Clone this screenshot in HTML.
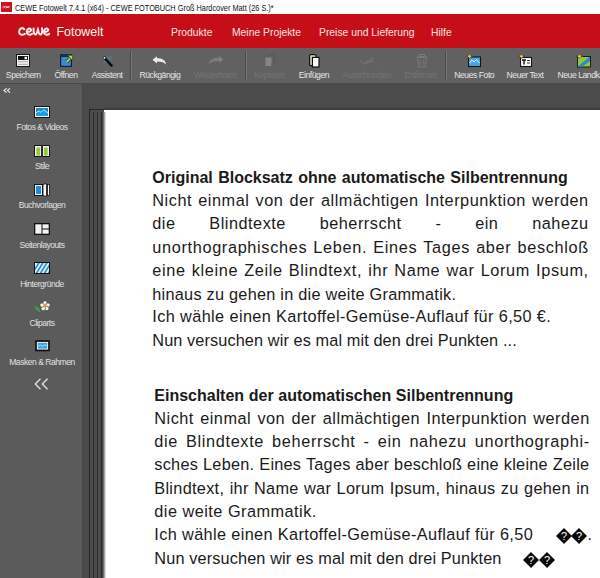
<!DOCTYPE html>
<html><head><meta charset="utf-8">
<style>
*{margin:0;padding:0;box-sizing:border-box}
html,body{width:600px;height:578px;overflow:hidden;background:#4b4b4b;font-family:"Liberation Sans",sans-serif}
.a{position:absolute}
#title{left:0;top:0;width:600px;height:14px;background:#fff}
#red{left:0;top:14px;width:600px;height:34px;background:#c60e18}
#tb{left:0;top:48px;width:600px;height:35px;background:#616161}
#tbb{left:0;top:83px;width:600px;height:1px;background:#4a4a4a}
#side{left:0;top:84px;width:82px;height:494px;background:#5b5b5b}
#sideb{left:82px;top:84px;width:1px;height:494px;background:#474747}
.tl{position:absolute;top:70px;font-size:8.6px;color:#e6e6e6;white-space:nowrap;letter-spacing:-0.45px;transform:translateX(-50%);line-height:10px}
.dis{color:#747474}
.sl{position:absolute;font-size:8.6px;color:#e0e0e0;white-space:nowrap;letter-spacing:-0.5px;transform:translateX(-50%);line-height:10px;left:42px}
.menu{position:absolute;top:27px;font-size:10.35px;color:#f6e4e4;white-space:nowrap;line-height:12px}
.ln{position:absolute;font-size:16.3px;line-height:20px;color:#1a1a1a;white-space:nowrap;text-align:justify;text-align-last:justify}
.b{font-weight:700;font-size:16px}
.w{position:absolute;font-size:16.3px;line-height:20px;color:#1a1a1a;white-space:nowrap}
</style></head><body>
<div id="title" class="a"></div>
<div class="a" style="left:1px;top:2px;width:11px;height:10px;background:#cc1020"></div><svg class="a" style="left:2px;top:5px" width="9" height="4" viewBox="0 0 9 4"><path d="M1.6 1 C0.6 1 0.5 3 1.6 3 M2.6 2 C3.6 2 3.6 1 3 1 C2.3 1 2.2 3 3.4 3 M4.1 1 L4.6 3 L5.1 1.6 L5.6 3 L6.1 1 M6.6 2 C7.6 2 7.6 1 7 1 C6.3 1 6.2 3 7.4 3" fill="none" stroke="#fbe0e0" stroke-width="0.7"/></svg>
<div class="a" style="left:15px;top:3px;font-size:8.8px;color:#111;white-space:nowrap;line-height:10px;transform-origin:0 0;transform:scaleX(0.835)">CEWE Fotowelt 7.4.1 (x64) - CEWE FOTOBUCH Groß Hardcover Matt (26 S.)*</div>
<div id="red" class="a"></div>
<svg class="a" style="left:17.5px;top:27px" width="33" height="10" viewBox="0 0 33 10"><g fill="none" stroke="#f8f0f0" stroke-width="2" stroke-linecap="round"><path d="M6.3 2.3 C5.5 1.2 3.8 1 2.6 1.7 C1 2.6 0.9 5.6 1.6 6.6 C2.6 8 5 8 6.8 6.8"/><path d="M8.8 4.9 C10.8 4.9 13 4.4 13.1 3 C13.1 1.6 11.5 1.2 10.5 1.7 C8.8 2.5 8.4 5.5 9.3 6.7 C10.3 7.9 12.5 7.8 14 6.8"/><path d="M15.6 1.6 C15.4 4 15.9 7.5 17.4 7.5 C18.9 7.5 19.4 4.2 19.9 2.6 C20.3 4.2 20.8 7.5 22.4 7.5 C23.9 7.5 24.6 4 24 1.2"/><path d="M26 4.9 C28 4.9 30.2 4.4 30.3 3 C30.3 1.6 28.7 1.2 27.7 1.7 C26 2.5 25.6 5.5 26.5 6.7 C27.5 7.9 29.7 7.8 31.2 6.8"/></g></svg>
<div class="a" style="left:56.5px;top:25px;font-size:12.4px;color:#f5f5f5;line-height:14px">Fotowelt</div>
<div class="menu" style="left:171px">Produkte</div>
<div class="menu" style="left:232px">Meine Projekte</div>
<div class="menu" style="left:319px">Preise und Lieferung</div>
<div class="menu" style="left:431px">Hilfe</div>
<div id="tb" class="a"></div>
<div id="tbb" class="a"></div>
<div class="a" style="left:130px;top:51px;width:1px;height:29px;background:#4a4a4a"></div>
<div class="a" style="left:131px;top:51px;width:1px;height:29px;background:#777"></div>
<div class="a" style="left:245px;top:51px;width:1px;height:29px;background:#4a4a4a"></div>
<div class="a" style="left:246px;top:51px;width:1px;height:29px;background:#777"></div>
<div class="a" style="left:445px;top:51px;width:1px;height:29px;background:#4a4a4a"></div>
<div class="a" style="left:446px;top:51px;width:1px;height:29px;background:#777"></div>
<div class="tl" style="left:23.2px">Speichern</div>
<div class="tl" style="left:66px">Öffnen</div>
<div class="tl" style="left:107.1px">Assistent</div>
<div class="tl" style="left:159.9px">Rückgängig</div>
<div class="tl dis" style="left:215.3px">Wiederholen</div>
<div class="tl dis" style="left:269.4px">Kopieren</div>
<div class="tl" style="left:313.9px">Einfügen</div>
<div class="tl dis" style="left:366.7px">Ausschneiden</div>
<div class="tl dis" style="left:420.8px">Entfernen</div>
<div class="tl" style="left:474.2px">Neues Foto</div>
<div class="tl" style="left:525px">Neuer Text</div>
<div class="tl" style="left:557.5px;transform:none">Neue Landkarte</div>

<div id="side" class="a"></div>
<div id="sideb" class="a"></div>
<svg class="a" style="left:2.5px;top:88px" width="8" height="5" viewBox="0 0 8 5"><path d="M3.6 0.3 L1 2.5 L3.6 4.7 M7 0.3 L4.4 2.5 L7 4.7" fill="none" stroke="#e6e6e6" stroke-width="1.1"/></svg>
<div class="sl" style="top:122px">Fotos &amp; Videos</div>
<div class="sl" style="top:161px">Stile</div>
<div class="sl" style="top:200px">Buchvorlagen</div>
<div class="sl" style="top:240px">Seitenlayouts</div>
<div class="sl" style="top:279px">Hintergründe</div>
<div class="sl" style="top:318px">Cliparts</div>
<div class="sl" style="top:357px">Masken &amp; Rahmen</div>
<svg class="a" style="left:34px;top:377.5px" width="15" height="12" viewBox="0 0 15 12"><path d="M6.5 0.8 L1.3 6 L6.5 11.2 M13.5 0.8 L8.3 6 L13.5 11.2" fill="none" stroke="#e6e6e6" stroke-width="1.3"/></svg>


<!-- toolbar icons -->
<svg class="a" style="left:16px;top:54px" width="14" height="13" viewBox="0 0 14 13"><rect x="0.5" y="0.5" width="13" height="12" fill="#f4f4f4" stroke="#151515"/><rect x="2" y="2" width="10" height="4" fill="#111"/><rect x="8.5" y="2.8" width="2.5" height="2.4" fill="#fff"/><rect x="2" y="7.3" width="10" height="0.9" fill="#9a9a9a"/><rect x="2" y="9.8" width="10" height="0.9" fill="#9a9a9a"/></svg>
<svg class="a" style="left:60px;top:54px" width="14" height="13" viewBox="0 0 14 13"><rect x="0.6" y="0.8" width="10.8" height="11.6" fill="#3a88d8" stroke="#152038" stroke-width="1.2"/><rect x="1" y="1.3" width="10" height="1.6" fill="#10203a"/><path d="M6.5 8 L10.2 4.3" stroke="#1e3010" stroke-width="3.2"/><path d="M6.5 8 L10.2 4.3" stroke="#a8dc58" stroke-width="1.8"/><path d="M7.5 1.3 L12.6 1.3 L12.6 6.4 Z" fill="#a8dc58" stroke="#1e3010" stroke-width="0.6"/></svg>
<svg class="a" style="left:100px;top:53px" width="16" height="14" viewBox="0 0 16 14"><path d="M3 11 L5 4.5 L12.5 2 L11 8 Z" fill="#4a8ca6" opacity="0.4"/><path d="M4.6 5 L11.6 12.6" stroke="#0a0a0a" stroke-width="2.4" stroke-linecap="round"/><circle cx="4.4" cy="4.8" r="1.6" fill="#1a1a1a"/><circle cx="4.4" cy="4.9" r="0.9" fill="#fff"/></svg>
<svg class="a" style="left:152px;top:56px" width="15" height="10" viewBox="0 0 15 10"><path d="M0.5 3.8 L5 0.3 L5 2.3 C10 2.3 13.5 4 14.2 8.8 C12.5 6.5 9.5 5.6 5 5.6 L5 7.4 Z" fill="#ececec"/></svg>
<svg class="a" style="left:208px;top:55.5px" width="16" height="9" viewBox="0 0 16 9"><path d="M15.5 3.3 L11 -0.2 L11 1.8 C6 1.8 2 3.5 0.7 8.3 C3 6 6.5 5.1 11 5.1 L11 6.9 Z" fill="#7e7e7e"/></svg>
<svg class="a" style="left:265px;top:54px" width="10" height="13" viewBox="0 0 10 13"><rect x="2.5" y="0.5" width="7" height="9.5" fill="none" stroke="#575757"/><rect x="0.5" y="3.5" width="6" height="8.5" fill="#858585"/></svg>
<svg class="a" style="left:309px;top:54px" width="11" height="14" viewBox="0 0 11 14"><rect x="0.6" y="0.6" width="6.4" height="11" rx="1" fill="#e6dcc6" stroke="#111" stroke-width="1.2"/><rect x="3.4" y="3.4" width="6.6" height="9.6" fill="#fafafa" stroke="#111" stroke-width="1.2"/></svg>
<svg class="a" style="left:359px;top:55px" width="17" height="11" viewBox="0 0 17 11"><path d="M1 5 L5 9 L15 2" fill="none" stroke="#6d6d6d" stroke-width="1.6"/><path d="M6 8 L15 6" fill="none" stroke="#747474" stroke-width="1.4"/></svg>
<svg class="a" style="left:416px;top:54px" width="12" height="14" viewBox="0 0 12 14"><rect x="3.5" y="0.5" width="5" height="2" fill="none" stroke="#7a7a7a"/><rect x="0.5" y="2.5" width="11" height="1.5" fill="#7a7a7a"/><path d="M1.8 4.5 L2.8 13 L9.2 13 L10.2 4.5" fill="none" stroke="#7a7a7a" stroke-width="1.1"/><path d="M4.5 6 L4.8 11 M7.5 6 L7.2 11" stroke="#727272"/></svg>
<svg class="a" style="left:466px;top:53px" width="16" height="15" viewBox="0 0 16 15"><rect x="2.5" y="4" width="12" height="9.5" fill="#4aa6e0" stroke="#141414" stroke-width="1.1"/><path d="M3.5 10 L6 7 L8 9 L10.5 6.5 L13.5 10" fill="none" stroke="#d8f2ff" stroke-width="1"/><path d="M3.5 1 L5 2.8 L7 3.3 L5 3.8 L3.5 5.6 L2 3.8 L0 3.3 L2 2.8 Z" fill="#f1c25a" stroke="#3a2a10" stroke-width="0.5"/></svg>
<svg class="a" style="left:518px;top:53px" width="15" height="15" viewBox="0 0 15 15"><rect x="2.5" y="4.5" width="11" height="9" fill="#f7f7f7" stroke="#141414" stroke-width="1.1"/><path d="M4 7 H8 M6 7 V11.5" stroke="#111" stroke-width="1.4"/><path d="M9 7.5 H12 M9 10 H12" stroke="#333" stroke-width="1"/><path d="M3.5 1 L5 2.8 L7 3.3 L5 3.8 L3.5 5.6 L2 3.8 L0 3.3 L2 2.8 Z" fill="#f1c25a" stroke="#3a2a10" stroke-width="0.5"/></svg>
<svg class="a" style="left:576px;top:53px" width="16" height="15" viewBox="0 0 16 15"><defs><clipPath id="cm"><rect x="2" y="4" width="12" height="9.5"/></clipPath></defs><rect x="1.5" y="3.5" width="13" height="10.5" fill="#8fca3a" stroke="#1c1c10" stroke-width="1"/><path d="M1 14 L14 3.5 L14 8 L6 14 Z" fill="#2a8cc6" clip-path="url(#cm)"/><path d="M3.5 1 L5 2.8 L7 3.3 L5 3.8 L3.5 5.6 L2 3.8 L0 3.3 L2 2.8 Z" fill="#f1c25a" stroke="#3a2a10" stroke-width="0.5"/></svg>
<!-- sidebar icons -->
<svg class="a" style="left:34px;top:106px" width="16" height="12" viewBox="0 0 16 12"><rect x="0" y="0" width="16" height="12" fill="#111"/><rect x="1" y="1" width="14" height="10" fill="#f5f5f5"/><rect x="2" y="2" width="12" height="8" fill="#1c86cc"/><path d="M2 6.8 L5 4.8 L7 6.3 L9.5 3.8 L14 6.8 L14 10 L2 10 Z" fill="#1aa0de"/><path d="M2 6.8 L5 4.8 L7 6.3 L9.5 3.8 L14 6.8" fill="none" stroke="#bdf0ff" stroke-width="0.9"/></svg>
<svg class="a" style="left:34px;top:144.7px" width="16" height="12" viewBox="0 0 16 12"><path d="M0.5 0.5 H7.7 V11.5 H0.5 Z M8.3 0.5 H15.5 V11.5 H8.3 Z" fill="#f3f3f3" stroke="#111"/><rect x="2.3" y="2.5" width="3.8" height="8" fill="#93c83c"/><rect x="9.9" y="2.5" width="3.8" height="8" fill="#93c83c"/></svg>
<svg class="a" style="left:34px;top:182.5px" width="16" height="14" viewBox="0 0 16 14"><rect x="0.5" y="1.5" width="8" height="11" fill="#f3f3f3" stroke="#111"/><rect x="2" y="3" width="5" height="8" fill="#1f8ad6"/><path d="M9 1.5 L12.5 0.5 L12.5 13.5 L9 12.5 Z" fill="#f5f5f5" stroke="#111" stroke-width="0.8"/><rect x="13.5" y="1.5" width="2" height="11" fill="#f5f5f5" stroke="#111" stroke-width="0.8"/></svg>
<svg class="a" style="left:34px;top:223px" width="16" height="12" viewBox="0 0 16 12"><rect x="0" y="0" width="16" height="12" fill="#111"/><rect x="1.3" y="1.3" width="6.2" height="9.4" fill="#f2f2f2"/><rect x="8.5" y="1.3" width="6.2" height="4.2" fill="#f2f2f2"/><rect x="8.5" y="6.5" width="6.2" height="4.2" fill="#f2f2f2"/></svg>
<svg class="a" style="left:34px;top:262px" width="16" height="12" viewBox="0 0 16 12"><defs><clipPath id="ch"><rect x="1" y="1" width="14" height="10"/></clipPath></defs><rect x="0" y="0" width="16" height="12" fill="#111"/><rect x="1" y="1" width="14" height="10" fill="#e8f6ff"/><g clip-path="url(#ch)" stroke="#2a90d2" stroke-width="1.8"><path d="M-2 12 L6 -1 M2 12 L10 -1 M6 12 L14 -1 M10 12 L18 -1 M14 12 L22 -1"/></g></svg>
<svg class="a" style="left:34px;top:299.5px" width="16" height="14" viewBox="0 0 16 14"><path d="M0.6 5.8 Q1.5 11.2 6.6 12.6 Q5.8 7 0.6 5.8 Z" fill="#3f9e3c"/><g transform="translate(11,6)" fill="#fbfbfb" stroke="#333" stroke-width="0.6"><circle cx="0" cy="-3" r="2.2"/><circle cx="2.9" cy="-0.9" r="2.2"/><circle cx="1.8" cy="2.4" r="2.2"/><circle cx="-1.8" cy="2.4" r="2.2"/><circle cx="-2.9" cy="-0.9" r="2.2"/></g><circle cx="11" cy="6" r="1.7" fill="#e3a81e"/></svg>
<svg class="a" style="left:35px;top:340.2px" width="15" height="11.5" viewBox="0 0 16 12" preserveAspectRatio="none"><rect x="0.5" y="0.5" width="15" height="11" fill="#111" stroke="#111" stroke-dasharray="1.2 0.8"/><rect x="2" y="2" width="12" height="8" fill="#f3f3f3"/><rect x="3" y="3" width="10" height="6" fill="#3aa2e0"/><path d="M3 7 L5.5 5.2 L8 6.6 L10.5 5 L13 6.5" fill="none" stroke="#d8f3ff" stroke-width="0.8"/></svg>
<!-- diamonds -->
<!-- page stack -->
<div class="a" style="left:89px;top:109px;width:15px;height:469px;background:#262626"></div>
<div class="a" style="left:90px;top:110px;width:14px;height:468px;background:#4c4c4c"></div>
<div class="a" style="left:93px;top:112px;width:1px;height:466px;background:#2a2a2a"></div>
<div class="a" style="left:97px;top:112px;width:1px;height:466px;background:#2a2a2a"></div>
<div class="a" style="left:100.5px;top:112px;width:1.2px;height:466px;background:#2a2a2a"></div>
<div class="a" style="left:104px;top:107px;width:496px;height:3px;background:linear-gradient(180deg,rgba(40,40,40,0),rgba(40,40,40,0.55))"></div>
<div class="a" style="left:104px;top:110px;width:496px;height:468px;background:#fff"></div>
<div class="a" style="left:102px;top:112px;width:4px;height:466px;background:linear-gradient(90deg,#303030,#7a7a7a 45%,#fff)"></div>
<div class="ln b" style="left:152.3px;top:168px;width:415.4px">Original Blocksatz ohne automatische Silbentrennung</div>
<div class="ln" style="left:152.3px;top:189.9px;width:436.4px;letter-spacing:0.53px">Nicht einmal von der allmächtigen Interpunktion werden</div>
<div class="ln" style="left:152.3px;top:213.4px;width:436.4px;letter-spacing:0.5px">die Blindtexte beherrscht - ein nahezu</div>
<div class="ln" style="left:152.3px;top:236.9px;width:436.6px;letter-spacing:0.66px">unorthographisches Leben. Eines Tages aber beschloß</div>
<div class="ln" style="left:152.3px;top:260.4px;width:436.5px;letter-spacing:0.64px">eine kleine Zeile Blindtext, ihr Name war Lorum Ipsum,</div>
<div class="ln" style="left:152.3px;top:283.9px;letter-spacing:0.25px;text-align-last:left">hinaus zu gehen in die weite Grammatik.</div>
<div class="ln" style="left:152.3px;top:306.4px;letter-spacing:0.385px;text-align-last:left">Ich wähle einen Kartoffel-Gemüse-Auflauf für 6,50 €.</div>
<div class="ln" style="left:152.3px;top:329.9px;letter-spacing:0.107px;text-align-last:left">Nun versuchen wir es mal mit den drei Punkten ...</div>

<div class="ln b" style="left:154.3px;top:386px;width:358.9px">Einschalten der automatischen Silbentrennung</div>
<div class="ln" style="left:154.3px;top:408.4px;width:435.4px;letter-spacing:0.5px">Nicht einmal von der allmächtigen Interpunktion werden</div>
<div class="ln" style="left:154.3px;top:430.9px;width:435.5px;letter-spacing:0.65px">die Blindtexte beherrscht - ein nahezu unorthographi-</div>
<div class="ln" style="left:154.3px;top:454.4px;width:435.1px;letter-spacing:0.25px">sches Leben. Eines Tages aber beschloß eine kleine Zeile</div>
<div class="ln" style="left:154.3px;top:477.9px;width:435.2px;letter-spacing:0.3px">Blindtext, ihr Name war Lorum Ipsum, hinaus zu gehen in</div>
<div class="ln" style="left:154.3px;top:501.4px;letter-spacing:0.48px;text-align-last:left">die weite Grammatik.</div>
<div class="ln" style="left:154.3px;top:524.4px;letter-spacing:0.367px;text-align-last:left">Ich wähle einen Kartoffel-Gemüse-Auflauf für 6,50</div>
<div class="ln" style="left:154.3px;top:547.9px;letter-spacing:0.135px;text-align-last:left">Nun versuchen wir es mal mit den drei Punkten</div>
<svg class="a" style="left:555.5px;top:528.3px" width="16" height="16" viewBox="0 0 16 16"><path d="M8 0 L16 8 L8 16 L0 8 Z" fill="#0a0a0a"/><text x="8" y="12" text-anchor="middle" font-family="Liberation Sans" font-size="11" fill="#fff">?</text></svg><svg class="a" style="left:571.3px;top:528.3px" width="16" height="16" viewBox="0 0 16 16"><path d="M8 0 L16 8 L8 16 L0 8 Z" fill="#0a0a0a"/><text x="8" y="12" text-anchor="middle" font-family="Liberation Sans" font-size="11" fill="#fff">?</text></svg><svg class="a" style="left:523.3px;top:551.8px" width="16" height="16" viewBox="0 0 16 16"><path d="M8 0 L16 8 L8 16 L0 8 Z" fill="#0a0a0a"/><text x="8" y="12" text-anchor="middle" font-family="Liberation Sans" font-size="11" fill="#fff">?</text></svg><svg class="a" style="left:539.3px;top:551.8px" width="16" height="16" viewBox="0 0 16 16"><path d="M8 0 L16 8 L8 16 L0 8 Z" fill="#0a0a0a"/><text x="8" y="12" text-anchor="middle" font-family="Liberation Sans" font-size="11" fill="#fff">?</text></svg><div class="a" style="left:587.5px;top:525px;font-size:16px;line-height:20px;color:#1a1a1a">.</div>
</body></html>
